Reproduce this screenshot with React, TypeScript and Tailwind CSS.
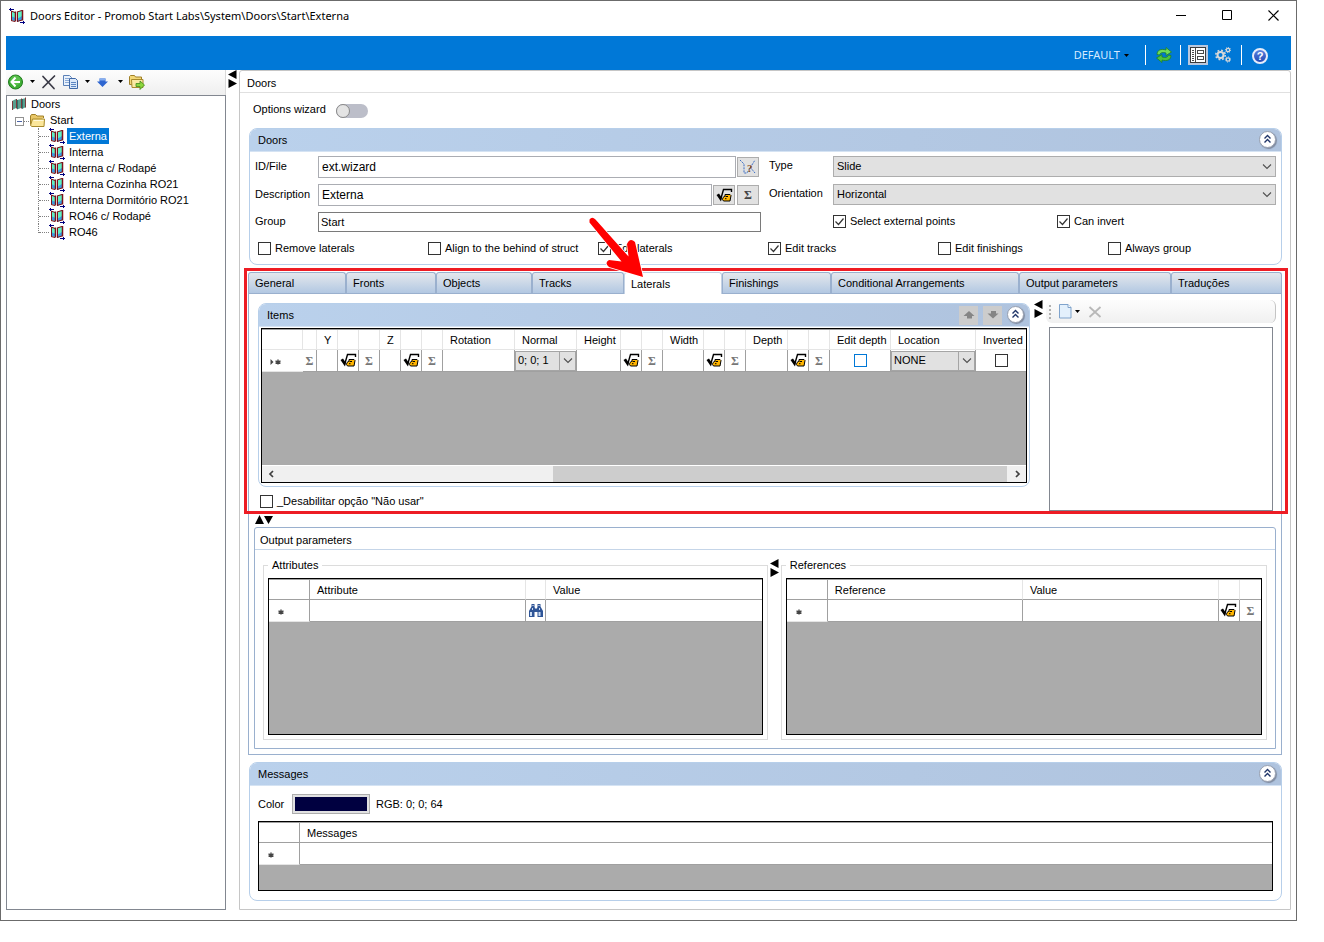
import React, { useState } from 'react';

interface TreeItem {
  id: number;
  name: string;
}

interface GridColumn {
  label?: string;
  width: string;
  cell?: 'formula' | 'sum' | 'normal' | 'depth' | 'location' | 'inverted' | 'find';
}

const treeItems: TreeItem[] = [
  { id: 1, name: 'Externa' },
  { id: 2, name: 'Interna' },
  { id: 3, name: 'Interna c/ Rodapé' },
  { id: 4, name: 'Interna Cozinha RO21' },
  { id: 5, name: 'Interna Dormitório RO21' },
  { id: 6, name: 'RO46 c/ Rodapé' },
  { id: 7, name: 'RO46' },
];

const tabs = [
  { name: 'General', width: 'w-[98px]' },
  { name: 'Fronts', width: 'w-[90px]' },
  { name: 'Objects', width: 'w-[96px]' },
  { name: 'Tracks', width: 'w-[92px]' },
  { name: 'Laterals', width: 'w-[98px]' },
  { name: 'Finishings', width: 'w-[109px]' },
  { name: 'Conditional Arrangements', width: 'w-[188px]' },
  { name: 'Output parameters', width: 'w-[152px]' },
  { name: 'Traduções', width: 'flex-1' },
];

const itemColumns: GridColumn[] = [
  { width: 'w-[14px]', cell: 'sum' },
  { label: 'Y', width: 'w-[21px]' },
  { width: 'w-[21px]', cell: 'formula' },
  { width: 'w-[21px]', cell: 'sum' },
  { label: 'Z', width: 'w-[21px]' },
  { width: 'w-[21px]', cell: 'formula' },
  { width: 'w-[21px]', cell: 'sum' },
  { label: 'Rotation', width: 'w-[72px]' },
  { label: 'Normal', width: 'w-[62px]', cell: 'normal' },
  { label: 'Height', width: 'w-[44px]' },
  { width: 'w-[21px]', cell: 'formula' },
  { width: 'w-[21px]', cell: 'sum' },
  { label: 'Width', width: 'w-[41px]' },
  { width: 'w-[21px]', cell: 'formula' },
  { width: 'w-[21px]', cell: 'sum' },
  { label: 'Depth', width: 'w-[42px]' },
  { width: 'w-[21px]', cell: 'formula' },
  { width: 'w-[21px]', cell: 'sum' },
  { label: 'Edit depth', width: 'w-[61px]', cell: 'depth' },
  { label: 'Location', width: 'w-[85px]', cell: 'location' },
  { label: 'Inverted', width: 'w-[51px]', cell: 'inverted' },
];

const attributeColumns: GridColumn[] = [
  { label: 'Attribute', width: 'w-[216px]' },
  { width: 'w-[20px]', cell: 'find' },
  { label: 'Value', width: 'w-[216px]' },
];

const referenceColumns: GridColumn[] = [
  { label: 'Reference', width: 'w-[195px]' },
  { label: 'Value', width: 'w-[196px]' },
  { width: 'w-[21px]', cell: 'formula' },
  { width: 'w-[21px]', cell: 'sum' },
];

/* ---------- Icons ---------- */

const DoorIcon = () => (
  <svg width="16" height="16" viewBox="0 0 16 16" className="shrink-0">
    <path d="M2 3l4.500 1v9L2 12z" fill="#5ff0c4" />
    <path d="M8 4l5-2v10l-5 2z" fill="#5ff0c4" />
    <path d="M2 8l4.500 2v3L2 12zM8 11l5-3v4l-5 2z" fill="#3c9be0" />
    <path d="M2.500 3v9.500M2 3l4 1.500M2 12.500l4 1M8.500 4v9.500M8 4l5-1.500M8 13.500l5-1.500" stroke="#7d1018" strokeWidth="1" fill="none" />
    <path d="M6.500 3.500v10M13.500 2v10.500" stroke="#7d1018" strokeWidth="1.500" />
    <path d="M0 1h5v1H0zM1 0h1v3H1zM11 14h5v1h-5zM14 13h1v3h-1z" fill="#000080" shapeRendering="crispEdges" />
  </svg>
);

const DoorsRootIcon = () => (
  <svg width="16" height="16" viewBox="0 0 16 16" className="shrink-0">
    <path d="M1 5l4-2v9l-4 2zM6 4l4-1v9l-4 1.500zM11 3l4-1v9l-4 2z" fill="#57a08f" />
    <path d="M1.500 5v9M5.500 3v9.500M10.500 2.500v10M14.500 1.500v10" stroke="#7a3a3c" strokeWidth="1" />
    <path d="M6.500 4v9M11.500 3v9.500" stroke="#2f6f68" strokeWidth="1" />
  </svg>
);

const FolderIcon = () => (
  <svg width="17" height="16" viewBox="0 0 17 16" className="shrink-0">
    <path d="M1.500 12.500V4l1-1.500h4L8 4h6.500v2" fill="#e8c768" stroke="#a08028" />
    <path d="M3 14.500l-1.500-1L3.500 7h12l-.5 7.500z" fill="#fbe69a" stroke="#a88a2c" />
    <path d="M4.500 8.500h10" stroke="#fff8d8" />
  </svg>
);

const FormulaIcon = () => (
  <svg width="17" height="17" viewBox="0 0 17 17" className="mx-auto block shrink-0">
    <path d="M4.500 13L7.500 2.500h8V5" fill="none" stroke="#000" strokeWidth="1.400" />
    <path d="M.5 8l2.500-1.500L5 9.500l1-.5-1 5.500z" fill="#000" />
    <path d="M9 7.500h5l1 1-1 5.500H7.500l-1-1.500.5-2 2-1.500z" fill="#ffb400" stroke="#000" />
    <path d="M9.500 9.500h2.500M9 11.700h1.500" stroke="#000" />
  </svg>
);

const BinocularsIcon = () => (
  <svg width="16" height="16" viewBox="0 0 16 16" className="mx-auto block">
    <path d="M3.500 1h3v2.500l.5 2h2l.5-2V1h3v2.500L15 8v6h-5.500V9h-3v5H1V8l2.500-4.500z" fill="#2f5597" />
    <path d="M2 9h2v4H2zM10.500 9h2v4h-2zM4 5h1v2H4zM11 5h1v2h-1z" fill="#c9daf2" />
    <path d="M4.500 2h1v1h-1zM10.500 2h1v1h-1z" fill="#fff" />
  </svg>
);

const PickIcon = () => (
  <svg width="18" height="16" viewBox="0 0 18 16">
    <path d="M1 1l4 4v9h3l8-13M11 8l5 6" fill="none" stroke="#3c6ec4" strokeDasharray="2 1" />
    <text x="8" y="13" fontSize="11" fontWeight="bold" fontFamily="Liberation Serif" fill="#8a4a1c">?</text>
  </svg>
);

const NewRowIcon = ({ current = false }: { current?: boolean }) => (
  <svg width="12" height="8" viewBox="0 0 12 8" className="block" fill="none" stroke="#444">
    {current && <path d="M.5 1v6l3-3z" fill="#444" stroke="none" />}
    <path d={current ? 'M8 1.500v5M5.500 2.800l5 2.500M10.500 2.800l-5 2.500' : 'M4 1.500v5M1.500 2.800l5 2.500M6.500 2.800l-5 2.500'} strokeWidth="1.400" />
  </svg>
);

const Caret = ({ className = 'text-black' }: { className?: string }) => (
  <svg width="5" height="3" viewBox="0 0 5 3" className={`shrink-0 ${className}`}>
    <path d="M0 0h5L2.500 3z" fill="currentColor" />
  </svg>
);

const Chevron = () => (
  <svg width="10" height="6" viewBox="0 0 10 6" fill="none">
    <path d="M1 .5l4 4 4-4" stroke="#505050" strokeWidth="1.100" />
  </svg>
);

const SplitArrows = () => (
  <svg width="9" height="18" viewBox="0 0 9 18" className="mx-auto shrink-0">
    <path d="M8.500 0v9L0 4.500zM.5 9v9L9 13.500z" fill="#000" />
  </svg>
);

/* ---------- Shared controls ---------- */

interface CheckBoxProps {
  label: string;
  defaultChecked?: boolean;
  hideLabel?: boolean;
  tone?: string;
}

const CheckBox: React.FC<CheckBoxProps> = ({ label, defaultChecked = false, hideLabel = false, tone = 'border-[#333333]' }) => (
  <label className="flex items-center gap-1 whitespace-nowrap leading-[13px]">
    <span className="relative block h-[13px] w-[13px] shrink-0">
      <input
        type="checkbox"
        aria-label={label}
        defaultChecked={defaultChecked}
        className={`peer block h-[13px] w-[13px] appearance-none border bg-white ${tone}`}
      />
      <svg className="pointer-events-none absolute inset-0 hidden peer-checked:block" width="13" height="13" viewBox="0 0 13 13" fill="none">
        <path d="M2.500 6.500l3 3 5-6" stroke="#333" strokeWidth="1.200" />
      </svg>
    </span>
    {!hideLabel && <span>{label}</span>}
  </label>
);

const SelectBox = ({ id, value }: { id: string; value: string }) => (
  <div className="relative">
    <select id={id} defaultValue={value} className="block h-[21px] w-full appearance-none border border-[#adadad] bg-[#e1e1e1] pl-[3px] text-[11px]">
      <option>{value}</option>
    </select>
    <span className="pointer-events-none absolute inset-y-0 right-1 flex items-center">
      <Chevron />
    </span>
  </div>
);

// Drop-down that fills a grid cell
const CellSelect = ({ label, value }: { label: string; value: string }) => (
  <div className="relative h-5">
    <select aria-label={label} defaultValue={value} className="block h-5 w-full appearance-none border border-[#a5a5a5] bg-[#e1e1e1] pl-[2px] text-[11px]">
      <option>{value}</option>
    </select>
    <span className="pointer-events-none absolute inset-y-px right-px flex w-4 items-center justify-center border-l border-[#a5a5a5]">
      <Chevron />
    </span>
  </div>
);

const CollapseButton = () => (
  <button
    aria-label="Collapse"
    className="mb-[2px] flex h-[17px] w-[17px] items-center justify-center rounded-full border border-[#98a0b0] bg-white shadow-[1px_1px_1px_#7f8ba0]"
  >
    <svg width="9" height="10" viewBox="0 0 9 10" fill="none">
      <path d="M1.500 4.500l3-3 3 3M1.500 8.500l3-3 3 3" stroke="#1f3468" strokeWidth="1.400" />
    </svg>
  </button>
);

interface PanelProps {
  title: string;
  actions?: React.ReactNode;
  children: React.ReactNode;
}

const Panel: React.FC<PanelProps> = ({ title, actions, children }) => (
  <section className="rounded-lg border border-[#b7cfea] bg-white">
    <header className="flex h-[23px] items-center justify-between rounded-t-[7px] border-b border-[#d5e3f3] bg-linear-to-r from-[#bad1ec] to-[#afc3de] pr-[5px] pl-2">
      <h2>{title}</h2>
      <div className="flex items-center gap-[5px]">
        {actions}
        <CollapseButton />
      </div>
    </header>
    {children}
  </section>
);

const renderCell = (column: GridColumn) => {
  switch (column.cell) {
    case 'formula':
      return <button aria-label="Formula" className="block w-full"><FormulaIcon /></button>;
    case 'sum':
      return <button className="block w-full text-center font-['Liberation_Serif',serif] text-[12px] font-bold leading-4 text-[#777]">Σ</button>;
    case 'normal':
      return <CellSelect label="Normal" value="0; 0; 1" />;
    case 'location':
      return <CellSelect label="Location" value="NONE" />;
    case 'depth':
      return <div className="flex justify-center"><CheckBox label="Edit depth" hideLabel tone="border-[#0078d7]" /></div>;
    case 'inverted':
      return <div className="flex justify-center"><CheckBox label="Inverted" hideLabel /></div>;
    case 'find':
      return <button aria-label="Find" className="block w-full"><BinocularsIcon /></button>;
    default:
      return null;
  }
};

interface DataGridProps {
  columns: GridColumn[];
  height: string;
  current?: boolean;
  footer?: React.ReactNode;
}

const DataGrid: React.FC<DataGridProps> = ({ columns, height, current = false, footer }) => (
  <div className={`flex flex-col justify-between overflow-hidden border border-black bg-[#ababab] ${height}`}>
    <table className="w-full table-fixed border-separate border-spacing-0 border-t border-[#a0a0a0] bg-white">
      <colgroup>
        <col className="w-[41px]" />
        {columns.map((column, i) => <col key={i} className={column.width} />)}
      </colgroup>
      <thead>
        <tr className="h-5">
          <th className={`border-r border-b ${current ? 'border-[#e5e5e5]' : 'border-[#a0a0a0]'}`} />
          {columns.map((column, i) => (
            <th
              key={i}
              className={`overflow-hidden whitespace-nowrap border-r border-b border-r-[#e5e5e5] p-0 pt-[2px] pl-[7px] text-left font-normal leading-[17px] last:border-r-0 ${
                current ? 'border-b-[#e5e5e5]' : 'border-b-[#a0a0a0]'
              }`}
            >
              {column.label}
            </th>
          ))}
        </tr>
      </thead>
      <tbody>
        <tr className="h-[22px]">
          <td className={`border-b border-b-[#e5e5e5] p-0 pt-[2px] pl-2 ${current ? '' : 'border-r border-r-[#a0a0a0]'}`}>
            <NewRowIcon current={current} />
          </td>
          {columns.map((column, i) => (
            <td key={i} className="border-r border-b border-[#a0a0a0] p-0 align-middle last:border-r-0">
              {renderCell(column)}
            </td>
          ))}
        </tr>
      </tbody>
    </table>
    {footer}
  </div>
);

/* ---------- Window ---------- */

const TitleBar = () => (
  <div className="flex h-[35px] items-start justify-between">
    <div className="flex items-center gap-[5px] pt-[5px] pl-2">
      <DoorIcon />
      <h1 className="font-['Noto_Sans','Segoe_UI',sans-serif] text-[11px] leading-5">
        Doors Editor - Promob Start Labs\System\Doors\Start\Externa
      </h1>
    </div>
    <div className="flex">
      <button aria-label="Minimize" className="flex h-7 w-[45px] items-center justify-center">
        <svg width="11" height="11" viewBox="0 0 11 11"><path d="M0 5.500h10" stroke="#000" /></svg>
      </button>
      <button aria-label="Maximize" className="flex h-7 w-[46px] items-center justify-center">
        <svg width="11" height="11" viewBox="0 0 11 11" fill="none"><path d="M.5 .5h9v9h-9z" stroke="#000" /></svg>
      </button>
      <button aria-label="Close" className="flex h-7 w-[46px] items-center justify-center">
        <svg width="11" height="11" viewBox="0 0 11 11"><path d="M.5 .5l10 10M10.500 .5l-10 10" stroke="#000" strokeWidth="1.200" /></svg>
      </button>
    </div>
  </div>
);

const Ribbon = () => (
  <div className="mx-[5px] flex h-[34px] items-center justify-end bg-[#0078d7] pt-1 pr-[23px]">
    <button className="mr-4 flex items-center gap-1 font-['Noto_Sans','Segoe_UI',sans-serif] text-[11px] leading-5 text-[#d6eaff]">
      DEFAULT
      <Caret />
    </button>
    <span className="h-5 w-px bg-white" />
    <button aria-label="Refresh" className="mr-2 ml-[10px]">
      <svg width="16" height="16" viewBox="0 0 16 16">
        <path d="M1 7.500C1 3 5 1.500 10 3V.5L15.500 5 10 8.500V6C6.500 5 4.500 5.500 3.500 8z" fill="#6fdc58" stroke="#1f7f2a" strokeWidth=".8" />
        <path d="M15 8.500C15 13 11 14.500 6 13v2.500L.5 11 6 7.500V10c3.500 1 5.500.5 6.500-2z" fill="#4cc33c" stroke="#1f7f2a" strokeWidth=".8" />
      </svg>
    </button>
    <span className="h-5 w-px bg-white" />
    <button aria-label="Show properties" className="mr-[7px] ml-[7px] flex h-5 w-5 items-center justify-center bg-[#bac8de]">
      <svg width="16" height="16" viewBox="0 0 16 16" fill="none" shapeRendering="crispEdges">
        <path d="M.5 .5h15v15H.5z" fill="#fff" stroke="#3c3c3c" />
        <path d="M5.500 1v14M2 3.500h2M2 5.500h2M2 7.500h2M2 9.500h2M2 11.500h2M2 13.500h2M7.500 3.500h6v3h-6zM7.500 9.500h6v3h-6z" stroke="#4a4a4a" />
      </svg>
    </button>
    <button aria-label="Settings" className="mr-[10px]">
      <svg width="16" height="16" viewBox="0 0 16 16" fill="none" stroke="#d8d8d8">
        <circle cx="5.500" cy="8" r="3" strokeWidth="2" />
        <circle cx="5.500" cy="8" r="4.700" strokeWidth="1.600" strokeDasharray="1.800 1.900" />
        <circle cx="13" cy="3" r="1.700" strokeWidth="1.300" />
        <circle cx="13" cy="3" r="2.600" strokeDasharray="1 1" />
        <circle cx="13" cy="12.500" r="1.700" strokeWidth="1.300" />
        <circle cx="13" cy="12.500" r="2.600" strokeDasharray="1 1" />
      </svg>
    </button>
    <span className="h-5 w-px bg-white" />
    <button aria-label="Help" className="mt-[2px] ml-[10px] flex h-4 w-4 items-center justify-center rounded-full border-2 border-[#e6ecfa] bg-linear-to-b from-[#5c82e0] to-[#2348b4] text-[11px] font-bold leading-3 text-white">
      ?
    </button>
  </div>
);

const TreeToolbar = () => (
  <div className="flex h-[25px] items-center gap-[6px] border-r border-[#d9d9d9] bg-linear-to-b from-[#fdfdfd] to-[#efefef] pb-[2px] pl-[2px]">
    <button aria-label="Back">
      <svg width="16" height="16" viewBox="0 0 16 16">
        <circle cx="7.500" cy="8" r="7" fill="#3fae35" stroke="#1f7a1c" />
        <circle cx="7.500" cy="6.500" r="5" fill="#6ccb5c" opacity=".6" />
        <path d="M7.500 3.500L3.500 8l4 4.500M4 8h8" fill="none" stroke="#fff" strokeWidth="2" />
      </svg>
    </button>
    <Caret />
    <button aria-label="Delete">
      <svg width="16" height="16" viewBox="0 0 16 16">
        <path d="M2 2.500l11 12M13.500 2l-11.500 11.500" stroke="#3a3a46" strokeWidth="1.700" strokeLinecap="round" />
      </svg>
    </button>
    <button aria-label="Copy">
      <svg width="16" height="16" viewBox="0 0 16 16">
        <path d="M.5 1.500h6l2 2v8h-8z" fill="#eaf2fc" stroke="#5c82b8" />
        <path d="M2 4.500h4M2 6.500h4M2 8.500h4" stroke="#8cabd6" />
        <path d="M6.500 4.500h6l2 2v8h-8z" fill="#dbe8f9" stroke="#3f68a6" />
        <path d="M8 8.500h5M8 10.500h5M8 12.500h5" stroke="#5c86c2" />
      </svg>
    </button>
    <Caret />
    <button aria-label="Move down">
      <svg width="16" height="16" viewBox="0 0 16 16">
        <path d="M3.500 4.500h6v3H12L6.500 13 1 7.500h2.500z" fill="#2f66d0" />
        <path d="M3.500 4.500h6v2h-6z" fill="#86aef0" />
      </svg>
    </button>
    <Caret />
    <button aria-label="Export folder">
      <svg width="16" height="16" viewBox="0 0 16 16">
        <path d="M.5 10.500v-8l1-1h4l1 1.500h6v8z" fill="#f3d878" stroke="#a08028" />
        <path d="M3 13.500l-.5-8h11.500v8z" fill="#fbe9a4" stroke="#a88a2c" />
        <path d="M7 9.500h4V7l4.500 4-4.500 4.500v-3H7z" fill="#8cd63c" stroke="#3f8a1c" strokeWidth=".8" />
      </svg>
    </button>
  </div>
);

const Tree = ({ selected, onSelect }: { selected: number; onSelect: (id: number) => void }) => (
  <nav className="flex-1 border border-[#828790] bg-white leading-4">
    <div className="flex items-center gap-1 pl-1">
      <DoorsRootIcon />
      <span>Doors</span>
    </div>
    <div className="flex h-4 items-center pl-2">
      <button aria-label="Collapse Start" className="mt-[2px] flex h-[9px] w-[9px] items-center justify-center border border-[#919191] bg-white">
        <span className="h-px w-[5px] bg-[#4b63a7]" />
      </button>
      <span className="mt-[2px] w-[5px] border-t border-dotted border-[#808080]" />
      <FolderIcon />
      <span className="pl-1">Start</span>
    </div>
    <ul className="ml-[31px]">
      {treeItems.map((item, i) => (
        <li key={item.id} className="flex h-4 items-center">
          <span className={`self-start border-l border-dotted border-[#808080] ${i === treeItems.length - 1 ? 'h-[9px]' : 'h-4'}`} />
          <span className="w-[10px] border-t border-dotted border-[#808080]" />
          <DoorIcon />
          <button
            onClick={() => onSelect(item.id)}
            className={`ml-[2px] whitespace-nowrap px-[2px] leading-4 ${selected === item.id ? 'bg-[#0078d7] text-white' : ''}`}
          >
            {item.name}
          </button>
        </li>
      ))}
    </ul>
  </nav>
);

const inputClasses = 'h-[22px] min-w-0 flex-1 border border-[#abadb3] bg-white px-[3px] text-[12px]';
const squareButtonClasses = 'flex h-5 w-[22px] items-center justify-center border border-[#adadad] bg-[#e1e1e1]';

const DoorsForm = () => (
  <div className="px-[5px] pt-1 pb-[9px]">
    <div className="grid grid-cols-[63px_1fr_72px_1fr] gap-y-[6px]">
      <label htmlFor="file" className="leading-5">ID/File</label>
      <div className="flex items-center gap-px pr-[2px]">
        <input id="file" defaultValue="ext.wizard" className={inputClasses} />
        <button aria-label="Pick file" className={squareButtonClasses}><PickIcon /></button>
      </div>
      <label htmlFor="type" className="pl-2 leading-[18px]">Type</label>
      <SelectBox id="type" value="Slide" />

      <label htmlFor="description" className="leading-5">Description</label>
      <div className="flex items-center gap-px pr-[2px]">
        <input id="description" defaultValue="Externa" className={inputClasses} />
        <button aria-label="Formula" className={squareButtonClasses}><FormulaIcon /></button>
        <button className={`${squareButtonClasses} ml-px font-['Liberation_Serif',serif] text-[12px] font-bold text-[#444]`}>Σ</button>
      </div>
      <label htmlFor="orientation" className="pl-2 leading-[18px]">Orientation</label>
      <SelectBox id="orientation" value="Horizontal" />

      <label htmlFor="group" className="leading-[18px]">Group</label>
      <input id="group" defaultValue="Start" className="h-5 w-full border border-[#7a7a7a] bg-white px-[2px] text-[11px]" />
      <div />
      <div className="grid grid-cols-[224px_1fr] items-center pb-[2px]">
        <CheckBox label="Select external points" defaultChecked />
        <CheckBox label="Can invert" defaultChecked />
      </div>
    </div>
    <div className="mt-[10px] -mr-[2px] grid grid-cols-6 pl-[3px]">
      <CheckBox label="Remove laterals" />
      <CheckBox label="Align to the behind of struct" />
      <CheckBox label="Edit laterals" defaultChecked />
      <CheckBox label="Edit tracks" defaultChecked />
      <CheckBox label="Edit finishings" />
      <CheckBox label="Always group" />
    </div>
  </div>
);

const ItemActions = () => (
  <>
    <button aria-label="Move up" className="flex h-[19px] w-[19px] items-center justify-center bg-[#cccccc]">
      <svg width="12" height="8" viewBox="0 0 12 8"><path d="M6 0l5.500 5H9v2.500H4V5H.5z" fill="#858585" /></svg>
    </button>
    <button aria-label="Move down" className="flex h-[19px] w-[19px] items-center justify-center bg-[#cccccc]">
      <svg width="12" height="8" viewBox="0 0 12 8"><path d="M6 7.500l5.500-5H9V0H4v2.500H.5z" fill="#858585" /></svg>
    </button>
  </>
);

const HorizontalScroll = () => (
  <div className="flex h-[17px] border-t border-white bg-[#f0f0f0]">
    <button aria-label="Scroll left" className="flex w-[17px] items-center justify-center">
      <svg width="6" height="8" viewBox="0 0 6 8" fill="none"><path d="M5 1L2 4l3 3" stroke="#404040" strokeWidth="1.700" /></svg>
    </button>
    <span className="w-[274px]" />
    <span className="flex-1 bg-[#cdcdcd]" />
    <button aria-label="Scroll right" className="ml-[2px] flex w-[17px] items-center justify-center">
      <svg width="6" height="8" viewBox="0 0 6 8" fill="none"><path d="M1 1l3 3-3 3" stroke="#404040" strokeWidth="1.700" /></svg>
    </button>
  </div>
);

// Highlighted tab area with the red frame and pointer
const TabArea = () => {
  const [activeTab, setActiveTab] = useState('Laterals');

  return (
    <div className="relative">
      <div role="tablist" className="flex h-[22px] border-b border-[#9ab0ce]">
        {tabs.map((tab) => (
          <button
            key={tab.name}
            role="tab"
            aria-selected={activeTab === tab.name}
            onClick={() => setActiveTab(tab.name)}
            className={`whitespace-nowrap rounded-t-[3px] pt-px pl-[6px] text-left leading-[19px] ${tab.width} ${
              activeTab === tab.name
                ? '-mb-px border-x border-t border-[#c4d2e4] bg-white'
                : 'border border-b-0 border-[#9ab0ce] bg-linear-to-b from-[#e4e7ec] to-[#b2c8e2]'
            }`}
          >
            {tab.name}
          </button>
        ))}
      </div>

      <div className="flex border-x border-[#9ab0ce] px-[5px]">
        <div className="min-w-0 flex-1 pt-[9px] pb-[6px] pl-1">
          <Panel title="Items" actions={<ItemActions />}>
            <div className="px-[2px] pt-px pb-[3px]">
              <DataGrid columns={itemColumns} current height="min-h-[155px]" footer={<HorizontalScroll />} />
            </div>
          </Panel>
          <div className="mt-2 ml-[2px]">
            <CheckBox label={'_Desabilitar opção "Não usar"'} />
          </div>
        </div>
        <div className="w-4 shrink-0 pt-[6px]"><SplitArrows /></div>
        <div className="flex w-[230px] shrink-0 flex-col pt-[6px] pb-[3px]">
          <div className="flex h-[23px] items-center rounded-md border-r border-[#c4c4c4] bg-linear-to-b from-[#fdfdfd] to-[#f0f0f0] pl-[3px]">
            <span className="mr-2 h-[14px] border-l-2 border-dotted border-[#b0b0b0]" />
            <button aria-label="New">
              <svg width="13" height="15" viewBox="0 0 13 15">
                <path d="M.5 .5h8.500l3 3v10.500H.5z" fill="#e3f0fc" stroke="#7fa3cc" />
                <path d="M9 .5v3h3" fill="#fff" stroke="#7fa3cc" />
              </svg>
            </button>
            <span className="mr-2 ml-[3px]"><Caret /></span>
            <button aria-label="Remove">
              <svg width="14" height="12" viewBox="0 0 14 12"><path d="M1.500 1l11 10M12.500 1l-11 10" stroke="#b8b8b8" strokeWidth="1.800" /></svg>
            </button>
          </div>
          <div className="mx-[3px] mt-1 flex-1 border border-[#828790] bg-white" />
        </div>
      </div>

      <div className="pointer-events-none absolute -top-1 -right-[6px] bottom-0 -left-1 border-[3px] border-[#ed1c24]" />
      <svg className="pointer-events-none absolute -top-[62px] left-[332px]" width="70" height="70" viewBox="0 0 70 70">
        <path
          d="M9.500 9.500 Q12 6 15.500 9.500 L48.500 46.500 L47 34 Q50 27 55 32 L63 67 L29 57 Q24 53 29 50 L41.500 51.500 L9.500 12.500 Z"
          fill="#ff0000"
          stroke="#fff"
          strokeWidth="1.500"
          paintOrder="stroke"
          strokeLinejoin="round"
        />
      </svg>
    </div>
  );
};

const OutputParameters = () => (
  <div className="border-x border-b border-[#9ab0ce] px-[5px] pb-[5px]">
    <svg width="18" height="13" viewBox="0 0 18 13" className="ml-px block">
      <path d="M4.500 1L9 10H0zM9 2h9l-4.500 8z" fill="#000" />
    </svg>
    <section className="rounded-t-[3px] border border-[#9ab0ce]">
      <h2 className="border-b border-[#c5d5e8] pt-[3px] pl-[5px] leading-[18px]">Output parameters</h2>
      <div className="flex px-2 pt-[7px] pb-2">
        <fieldset className="min-w-0 flex-[505] border border-[#dcdcdc] px-1 pt-[5px] pb-1">
          <legend className="px-1 leading-4">Attributes</legend>
          <DataGrid columns={attributeColumns} height="min-h-[157px]" />
        </fieldset>
        <div className="w-[13px] shrink-0 pt-[2px]"><SplitArrows /></div>
        <fieldset className="min-w-0 flex-[486] border border-[#dcdcdc] px-1 pt-[5px] pb-1">
          <legend className="px-1 leading-4">References</legend>
          <DataGrid columns={referenceColumns} height="min-h-[157px]" />
        </fieldset>
      </div>
    </section>
  </div>
);

const Messages = () => (
  <Panel title="Messages">
    <div className="px-2 pt-2 pb-[9px]">
      <div className="mb-[7px] flex h-5 items-center">
        <span className="w-[34px]">Color</span>
        <button aria-label="Message color" className="mr-[6px] h-5 w-[78px] border border-[#adadad] bg-[#e1e1e1] p-[2px]">
          <span className="block h-full bg-[#000040]" />
        </button>
        <span>RGB: 0; 0; 64</span>
      </div>
      <DataGrid columns={[{ label: 'Messages', width: 'w-auto' }]} height="min-h-[70px]" />
    </div>
  </Panel>
);

const App: React.FC = () => {
  const [selectedDoor, setSelectedDoor] = useState(1);
  const [wizardOn, setWizardOn] = useState(false);

  return (
    <div className="flex min-h-screen flex-col bg-white pr-[27px] pb-[21px] font-['Liberation_Sans',Arial,sans-serif] text-[11px] text-black">
      <div className="flex flex-1 flex-col border border-[#6b6b6b] bg-white">
        <TitleBar />
        <Ribbon />

        <div className="mx-[5px] mb-[10px] flex flex-1">
          {/* Tree */}
          <aside className="flex w-[220px] shrink-0 flex-col">
            <TreeToolbar />
            <Tree selected={selectedDoor} onSelect={setSelectedDoor} />
          </aside>
          <div className="w-[13px] shrink-0"><SplitArrows /></div>

          {/* Editor */}
          <main className="min-w-0 flex-1 rounded-t-[3px] border border-[#c6c6c6]">
            <h2 className="border-b border-[#e0e0e0] pt-[3px] pl-[7px] leading-[18px]">Doors</h2>
            <div className="px-2 pb-2">
              <div className="flex h-[35px] items-center gap-[10px] pl-[5px]">
                <span id="wizard-label" className="pb-[2px]">Options wizard</span>
                <button
                  role="switch"
                  aria-checked={wizardOn}
                  aria-labelledby="wizard-label"
                  onClick={() => setWizardOn(!wizardOn)}
                  className={`flex h-[14px] w-8 rounded-full bg-[#bcbec9] ${wizardOn ? 'justify-end' : ''}`}
                >
                  <span className="h-[14px] w-[14px] rounded-full border border-[#8a8a8a] bg-[#e4e4e4]" />
                </button>
              </div>

              <div className="mb-[7px] ml-px">
                <Panel title="Doors"><DoorsForm /></Panel>
              </div>
              <TabArea />
              <OutputParameters />
              <div className="mt-[7px] ml-px">
                <Messages />
              </div>
            </div>
          </main>
        </div>
      </div>
    </div>
  );
};

export default App;
